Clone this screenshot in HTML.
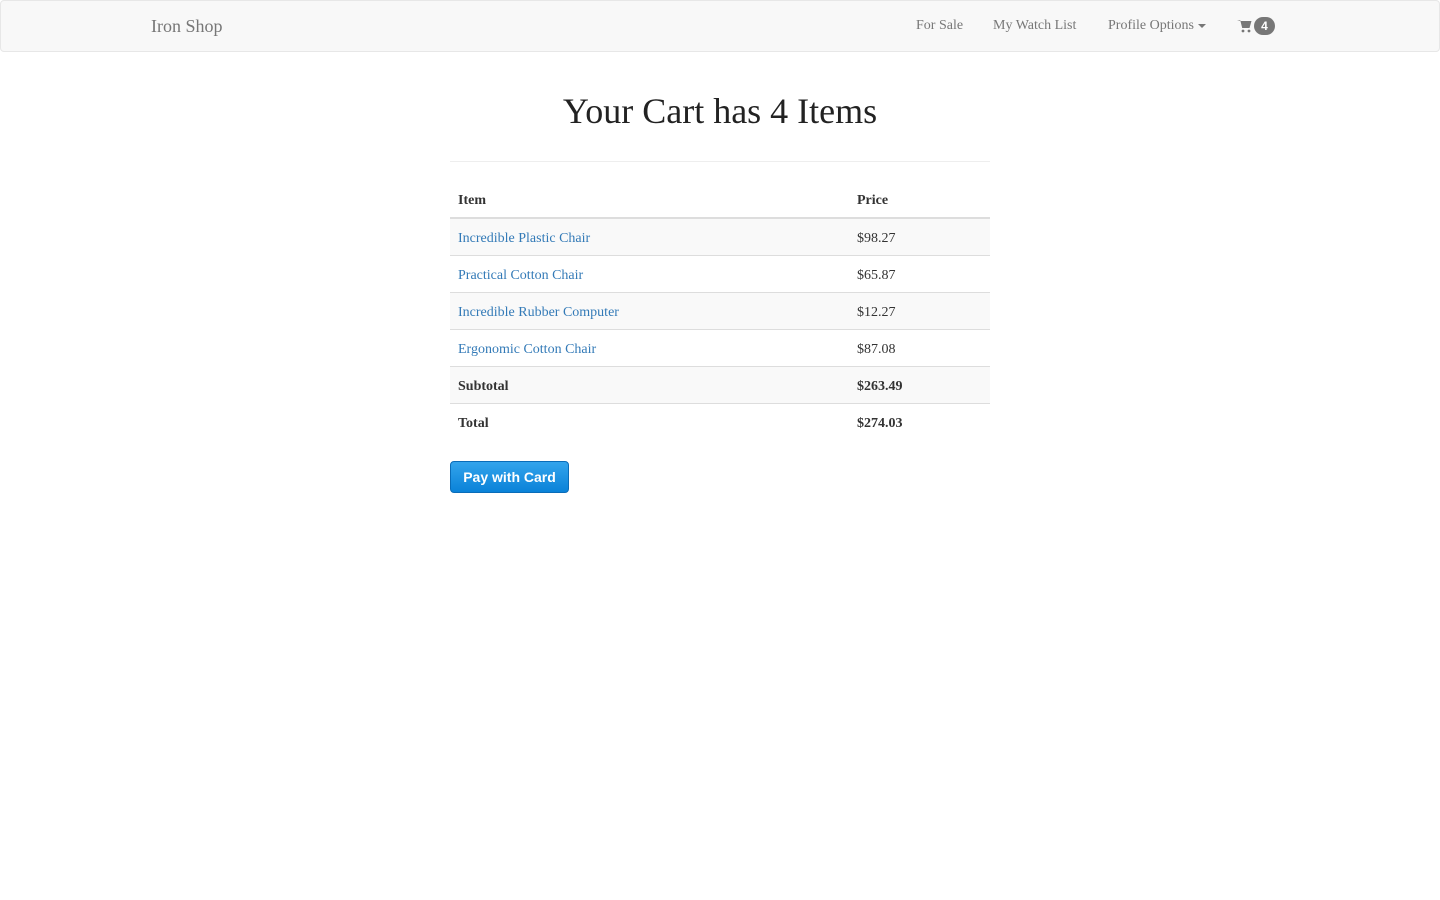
<!DOCTYPE html>
<html><head><style>
body{margin:0;font-family:"Liberation Serif",serif;font-size:14px;color:#333;background:#fff}
.nav{position:absolute;left:0;top:0;width:1438px;height:50px;background:#f8f8f8;border:1px solid #e7e7e7;border-radius:4px}
.brand{position:absolute;left:150px;top:15px;font-size:18px;color:#777}
.nl{position:absolute;top:17px;color:#777;font-size:14px}
.caret{display:inline-block;width:0;height:0;border-left:4px solid transparent;border-right:4px solid transparent;border-top:4px solid #777;vertical-align:middle;margin-left:4px}
.badge{position:absolute;left:1253px;top:16px;width:21px;height:18px;border-radius:9px;background:#777;color:#fff;font-family:"Liberation Sans",sans-serif;font-weight:bold;font-size:12px;text-align:center;line-height:18px}
h1{position:absolute;left:0;width:1440px;top:90px;margin:0;text-align:center;font-weight:normal;font-size:36px;line-height:42px;color:#222}
.hr{position:absolute;left:450px;top:161px;width:540px;border-top:1px solid #eee}
table{position:absolute;left:450px;top:182px;width:540px;border-collapse:collapse}
td,th{height:32px;padding:4px 8px 0;text-align:left;border-top:1px solid #ddd;line-height:20px}
th{border-top:0;border-bottom:2px solid #ddd;height:33px;padding-top:2px}
tr.s td{background:#f9f9f9}
td:first-child,th:first-child{width:383px}
a{color:#337ab7;text-decoration:none}
.btn{position:absolute;left:450px;top:461px;width:117px;height:30px;border:1px solid #0a6cb8;border-radius:4px;background:linear-gradient(#33a4ec,#0a82d8);color:#fff;font-family:"Liberation Sans",sans-serif;font-weight:bold;font-size:14px;text-align:center;line-height:30px}
</style></head><body>
<div class="nav">
<span class="brand">Iron Shop</span>
<span class="nl" style="left:915px">For Sale</span>
<span class="nl" style="left:992px">My Watch List</span>
<span class="nl" style="left:1107px">Profile Options<span class="caret"></span></span>
<svg style="position:absolute;left:1236px;top:18px" width="15" height="14" viewBox="0 0 15 14"><path d="M0 1h3.2l2 8h7.3l2-7H4z" fill="#777"/><circle cx="6" cy="12" r="1.4" fill="#777"/><circle cx="12" cy="12" r="1.4" fill="#777"/></svg>
<span class="badge">4</span>
</div>
<h1>Your Cart has 4 Items</h1>
<div class="hr"></div>
<table>
<tr><th>Item</th><th>Price</th></tr>
<tr class="s"><td><a>Incredible Plastic Chair</a></td><td>$98.27</td></tr>
<tr><td><a>Practical Cotton Chair</a></td><td>$65.87</td></tr>
<tr class="s"><td><a>Incredible Rubber Computer</a></td><td>$12.27</td></tr>
<tr><td><a>Ergonomic Cotton Chair</a></td><td>$87.08</td></tr>
<tr class="s"><td><b>Subtotal</b></td><td><b>$263.49</b></td></tr>
<tr><td><b>Total</b></td><td><b>$274.03</b></td></tr>
</table>
<div class="btn">Pay with Card</div>
</body></html>
